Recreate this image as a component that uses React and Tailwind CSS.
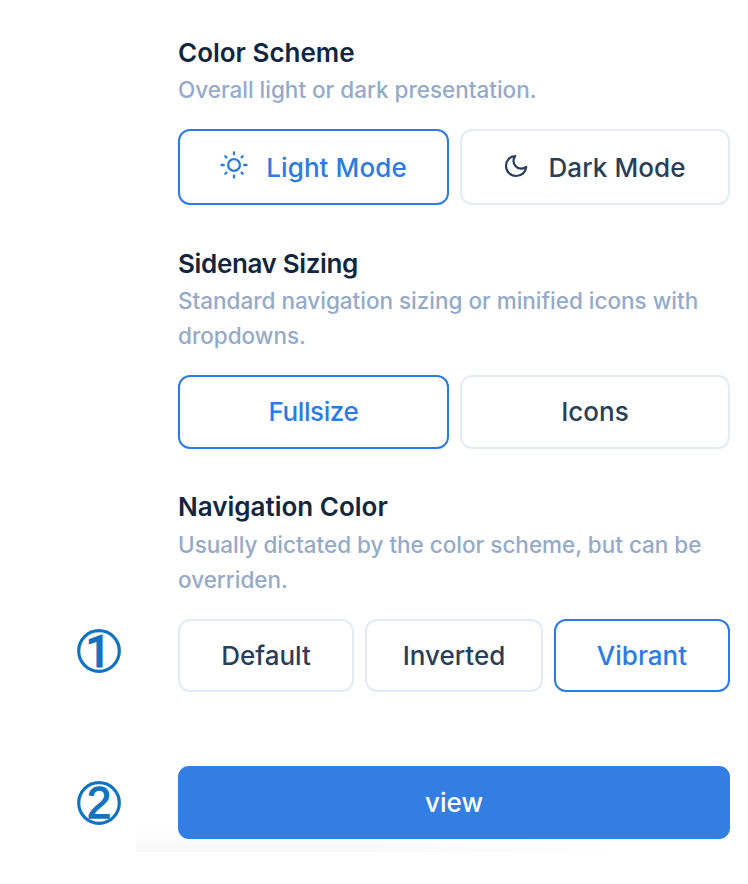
function SunIcon() {
  return (
    <svg width="28" height="28" viewBox="0 0 28 28" fill="none" stroke="currentColor" strokeWidth="2.3" strokeLinecap="round" className="shrink-0">
      <circle cx="14" cy="14" r="5.900" />
      <path d="M14 1.500v1.800M14 24.700v1.800M1.500 14h2.300M24.200 14h2.300M5.300 5.300l1.100 1.100M21.600 21.600l1.100 1.100M22.700 5.300l-1.100 1.100M6.400 21.600L5.300 22.700" />
    </svg>
  )
}

function MoonIcon() {
  return (
    <svg width="24" height="24" viewBox="0 0 24 24" fill="none" stroke="currentColor" strokeWidth="2.2" strokeLinejoin="round" strokeLinecap="round" className="shrink-0">
      <path d="M11.2 2C6 2.200 2 6.400 2 11.900C2 17.500 6.500 22 12.100 22C17.600 22 21.900 18 22.200 12.900C20.700 14.200 18.900 14.700 16.900 14.600C12.700 14.400 9.500 11 9.500 6.900C9.500 5 10.100 3.300 11.200 2Z" />
    </svg>
  )
}

function Badge({ n, children }) {
  return (
    <svg width="46" height="46" viewBox="0 0 46 46" className="ml-[76px]" aria-label={n}>
      <circle cx="23" cy="23" r="20.3" fill="none" stroke="#1273c0" strokeWidth="3.200" />
      {children}
    </svg>
  )
}

function Heading({ title, children, tight, gap = 'h-[37px]' }) {
  return (
    <div>
      <h2 className={`${gap} text-[26px] leading-[35px] font-semibold text-[#12263f] ${tight ? 'tracking-[-0.35px]' : ''}`}>{title}</h2>
      <p className="text-[22.5px] leading-[35px] font-[450] tracking-[-0.01px] text-[#95aac9] whitespace-nowrap">{children}</p>
    </div>
  )
}

function Option({ active, className = '', children }) {
  return (
    <button className={`flex items-center justify-center rounded-[12px] border-2 bg-white text-[26px] leading-[35px] font-[450] ${active ? 'border-[#2c7be5] text-[#2c7be5]' : 'border-[#e3ebf6] text-[#283e59]'} ${className}`}>
      {children}
    </button>
  )
}

export default function App() {
  return (
    <main className="h-[884px] w-[748px] overflow-hidden bg-white pt-[35px] font-['Inter',sans-serif]">
      <section className="ml-[178px] w-[552px]">
        <Heading title="Color Scheme">Overall light or dark presentation.</Heading>
        <div className="mt-[22px] grid h-[76px] grid-cols-[271px_270px] gap-[11px]">
          <Option active className="tracking-[0.1px]">
            <span className="mr-[18px] mb-[4px]"><SunIcon /></span>Light Mode
          </Option>
          <Option className="tracking-[0.1px]">
            <span className="mr-[20px] mb-[3px]"><MoonIcon /></span>Dark Mode
          </Option>
        </div>
      </section>

      <section className="mt-[41px] ml-[178px] w-[552px]">
        <Heading title="Sidenav Sizing" tight>
          Standard navigation sizing or minified icons with<br />dropdowns.
        </Heading>
        <div className="mt-[22px] grid h-[74px] grid-cols-[271px_270px] gap-[11px]">
          <Option active className="pb-[2px] tracking-[-0.4px]">Fullsize</Option>
          <Option className="pb-[2px]">Icons</Option>
        </div>
      </section>

      <section className="mt-[40px]">
        <div className="ml-[178px]">
          <Heading title="Navigation Color" gap="h-[38px]">
            Usually dictated by the color scheme, but can be<br />overriden.
          </Heading>
        </div>
        <div className="mt-[22px] grid h-[74px] grid-cols-[178px_552px]">
          <div className="pt-[9px]">
            <Badge n="1">
              <text x="22" y="38.500" textAnchor="middle" fontSize="44" fontWeight="500" fill="#1273c0" stroke="#1273c0" strokeWidth="0.800" fontFamily="Roboto, sans-serif">1</text>
            </Badge>
          </div>
          <div className="grid h-[73px] grid-cols-[176px_178px_176px] gap-[11px]">
            <Option className="pb-[1px]">Default</Option>
            <Option className="pb-[1px]">Inverted</Option>
            <Option active className="pb-[1px]">Vibrant</Option>
          </div>
        </div>
      </section>

      <section className="mt-[73px] grid grid-cols-[136px_612px]">
        <div className="pt-[14px]">
          <Badge n="2">
            <text x="23" y="37.500" textAnchor="middle" fontSize="43.500" fill="#1273c0" stroke="#1273c0" strokeWidth="1.300" fontFamily="Liberation Sans, Arial, sans-serif">2</text>
          </Badge>
        </div>
        <div className="h-[86px] bg-[linear-gradient(to_right,transparent_35%,white_80%),linear-gradient(to_bottom,white_70%,#f8f8f8)] pl-[42px]">
          <button className="flex h-[73px] w-[552px] items-center justify-center rounded-[11px] bg-[#327ee3] text-[26px] leading-[35px] font-[450] text-white">view</button>
        </div>
      </section>
    </main>
  )
}
